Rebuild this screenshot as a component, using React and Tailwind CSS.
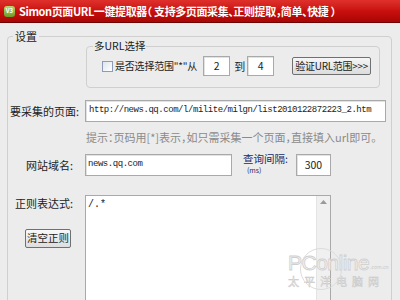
function Field({ className = "", children }) {
  return (
    <div className={`bg-white border border-[#a9a9a9] shadow-[inset_1px_1px_0_#e2e2e2] flex items-center overflow-hidden ${className}`}>
      {children}
    </div>
  );
}

export default function App() {
  return (
    <div className="w-[400px] h-[300px] overflow-hidden bg-[#ececec] text-[#222] relative whitespace-nowrap font-['Noto_Sans_CJK_SC','Liberation_Sans',sans-serif] [font-feature-settings:'halt']">
      {/* title bar */}
      <div className="h-[23px] bg-gradient-to-b from-[#e0302c] via-[#c8100e] to-[#a80605] border-b border-[#6e0000] flex items-center pl-[4px] gap-[4px]">
        <div className="w-[11px] h-[11px] rounded-[3px] bg-gradient-to-b from-[#b7d96b] to-[#6e9a23] flex items-center justify-center">
          <span className="text-[6px] leading-none text-white font-bold">V3</span>
        </div>
        <span className="text-white text-[11px] tracking-[-0.4px] font-bold">
          Simon页面URL一键提取器（ 支持多页面采集、正则提取，简单、快捷 ）
        </span>
      </div>

      <fieldset className="ml-[7px] mr-[8px] mt-[6px] border border-[#cfcfcf] rounded-[4px] h-[300px] px-0 pb-0">
        <legend className="ml-[5px] px-[2px] text-[11px] leading-[14px]">设置</legend>

        <fieldset className="ml-[78px] mr-[11px] mt-[-3px] h-[48px] border border-[#cfcfcf] rounded-[4px] px-0 pb-0">
          <legend className="ml-[6px] px-[1px] text-[10.5px] leading-[12px]">多URL选择</legend>
          <div className="flex items-center mt-[4px] ml-[15px]">
            <div className="w-[11px] h-[11px] border border-[#8d9db5] bg-gradient-to-br from-[#dfe5ee] to-[#ffffff]" />
            <span className="ml-[2px] text-[10px] tracking-[-0.2px] leading-none">是否选择范围"*"从</span>
            <Field className="ml-[6px] w-[27px] h-[20px] justify-center">
              <span className="text-[10.5px]">2</span>
            </Field>
            <span className="ml-[4px] text-[11px]">到</span>
            <Field className="ml-[2px] w-[27px] h-[20px] justify-center">
              <span className="text-[10.5px]">4</span>
            </Field>
            <button className="ml-[18px] h-[18px] w-[79px] border border-[#707070] rounded-[2px] bg-gradient-to-b from-[#f6f6f6] to-[#dcdcdc] text-[10px] tracking-[-0.3px] leading-none flex items-center justify-center">
              验证URL范围&gt;&gt;&gt;
            </button>
          </div>
        </fieldset>

        <div className="flex items-center mt-[12px]">
          <span className="w-[71px] text-right text-[11px]">要采集的页面:</span>
          <Field className="ml-[6px] w-[301px] h-[22px] pl-[3px]">
            <span className="text-[9px] tracking-[-0.45px] font-['Liberation_Mono',monospace]">
              http://news.qq.com/l/milite/milgn/list2010122872223_2.htm
            </span>
          </Field>
        </div>

        <div className="ml-[78px] mt-[8px] text-[11px] leading-[14px] text-[#8a8a8a]">
          提示：页码用[*]表示，如只需采集一个页面，直接填入url即可。
        </div>

        <div className="flex items-center mt-[10px]">
          <span className="w-[65px] text-right text-[11px]">网站域名:</span>
          <Field className="ml-[12px] w-[147px] h-[22px] pl-[2px]">
            <span className="text-[9px] tracking-[-0.45px] font-['Liberation_Mono',monospace]">news.qq.com</span>
          </Field>
          <div className="ml-[11px] flex flex-col items-start mt-[-3px]">
            <span className="text-[10.5px] leading-[12px] text-[#1a2a6a]">查询间隔:</span>
            <span className="ml-[4px] mt-[1px] text-[7px] leading-[8px] text-[#1a2a6a]">(ms)</span>
          </div>
          <Field className="ml-[8px] w-[35px] h-[22px] justify-center">
            <span className="text-[10.5px]">300</span>
          </Field>
        </div>

        <div className="flex mt-[19px]">
          <div className="w-[65px] flex flex-col items-end">
            <span className="text-[11px] leading-[16px]">正则表达式:</span>
            <button className="mt-[18px] mr-[2px] w-[46px] h-[19px] border border-[#707070] rounded-[2px] bg-gradient-to-b from-[#f8f8f8] to-[#dedede] text-[10.5px] leading-none flex items-center justify-center">
              清空正则
            </button>
          </div>
          <div className="ml-[12px] w-[246px] h-[120px] bg-white border border-[#a9a9a9] flex">
            <div className="flex-1 pl-[2px] pt-[1px] text-[10px] font-['Liberation_Mono',monospace]">/.*</div>
            <div className="w-[14px] bg-[#f0f0f0] border-l border-[#e4e4e4] flex justify-center pt-[4px]">
              <svg width="7" height="4" viewBox="0 0 7 4">
                <path d="M0 4 L3.5 0 L7 4 Z" fill="#9a9a9a" />
              </svg>
            </div>
          </div>
        </div>
      </fieldset>

      {/* watermark */}
      <div className="absolute left-[288px] top-[252px] flex flex-col items-start pointer-events-none">
        <div className="absolute left-[12px] top-[-4px] w-[42px] h-[42px] rounded-full border border-[#dcdcdc]" />
        <div className="flex items-end">
          <span className="text-[21px] leading-none text-[#f4f4f4] tracking-[-0.5px] font-['Liberation_Sans',sans-serif] [-webkit-text-stroke:0.8px_#cfcfcf]">
            PConline
          </span>
          <span className="text-[5px] text-[#c8c8c8] ml-[1px] mb-[3px]">.com.cn</span>
        </div>
        <span className="mt-[3px] text-[11px] leading-none tracking-[5px] text-[#f4f4f4] [-webkit-text-stroke:0.5px_#c8c8c8]">
          太平洋电脑网
        </span>
      </div>
    </div>
  );
}
